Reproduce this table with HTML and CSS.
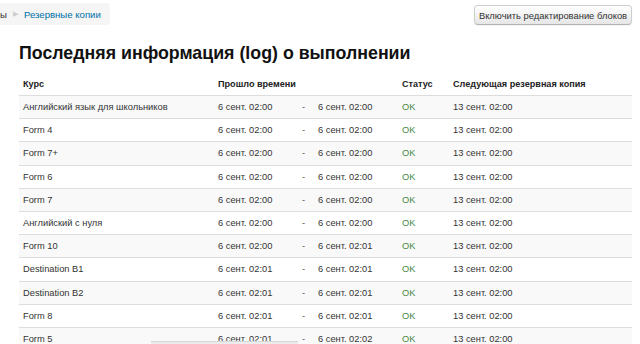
FILE: index.html
```html
<!DOCTYPE html>
<html lang="ru">
<head>
<meta charset="utf-8">
<title>Резервные копии</title>
<link rel="stylesheet" href="styles.css">
</head>
<body>
<div class="topbar">
  <nav class="breadcrumb">
    <span class="crumb">ы</span>
    <span class="sep">&#9654;</span>
    <a class="crumb link" href="#">Резервные копии</a>
  </nav>
  <button class="btn">Включить редактирование блоков</button>
</div>
<main class="content">
  <h2 class="title">Последняя информация (log) о выполнении</h2>
  <table class="log">
    <colgroup>
      <col class="c1"><col class="c2"><col class="c3"><col class="c4"><col class="c5"><col class="c6">
    </colgroup>
    <thead>
      <tr><th>Курс</th><th colspan="3">Прошло времени</th><th>Статус</th><th>Следующая резервная копия</th></tr>
    </thead>
    <tbody>
      <tr><td>Английский язык для школьников</td><td>6 сент. 02:00</td><td class="dash">-</td><td>6 сент. 02:00</td><td class="ok">OK</td><td>13 сент. 02:00</td></tr>
      <tr><td>Form 4</td><td>6 сент. 02:00</td><td class="dash">-</td><td>6 сент. 02:00</td><td class="ok">OK</td><td>13 сент. 02:00</td></tr>
      <tr><td>Form 7+</td><td>6 сент. 02:00</td><td class="dash">-</td><td>6 сент. 02:00</td><td class="ok">OK</td><td>13 сент. 02:00</td></tr>
      <tr><td>Form 6</td><td>6 сент. 02:00</td><td class="dash">-</td><td>6 сент. 02:00</td><td class="ok">OK</td><td>13 сент. 02:00</td></tr>
      <tr><td>Form 7</td><td>6 сент. 02:00</td><td class="dash">-</td><td>6 сент. 02:00</td><td class="ok">OK</td><td>13 сент. 02:00</td></tr>
      <tr><td>Английский с нуля</td><td>6 сент. 02:00</td><td class="dash">-</td><td>6 сент. 02:00</td><td class="ok">OK</td><td>13 сент. 02:00</td></tr>
      <tr><td>Form 10</td><td>6 сент. 02:00</td><td class="dash">-</td><td>6 сент. 02:01</td><td class="ok">OK</td><td>13 сент. 02:00</td></tr>
      <tr><td>Destination B1</td><td>6 сент. 02:01</td><td class="dash">-</td><td>6 сент. 02:01</td><td class="ok">OK</td><td>13 сент. 02:00</td></tr>
      <tr><td>Destination B2</td><td>6 сент. 02:01</td><td class="dash">-</td><td>6 сент. 02:01</td><td class="ok">OK</td><td>13 сент. 02:00</td></tr>
      <tr><td>Form 8</td><td>6 сент. 02:01</td><td class="dash">-</td><td>6 сент. 02:01</td><td class="ok">OK</td><td>13 сент. 02:00</td></tr>
      <tr><td>Form 5</td><td>6 сент. 02:01</td><td class="dash">-</td><td>6 сент. 02:02</td><td class="ok">OK</td><td>13 сент. 02:00</td></tr>
    </tbody>
  </table>
</main>
<div class="hscroll"></div>
</body>
</html>
```
FILE: styles.css
```css
html, body {
  margin: 0;
  padding: 0;
  background: #fff;
  overflow: hidden;
  height: 344px;
}
body {
  font-family: "Liberation Sans", Arial, sans-serif;
  color: #333;
  font-size: 9.3px;
  position: relative;
}
.topbar {
  display: flex;
  justify-content: space-between;
  align-items: flex-start;
  padding: 3px 8px 0 0;
  height: 32px;
  box-sizing: border-box;
}
.breadcrumb {
  display: flex;
  align-items: center;
  white-space: nowrap;
  background: #f5f5f5;
  border-radius: 0 4px 4px 0;
  height: 22px;
  padding: 0 9px 0 0;
  font-size: 9.6px;
}
.crumb { color: #333; }
.sep {
  color: #ccc;
  font-size: 7px;
  margin: 0 6px 0 6px;
}
.link {
  color: #0070a8;
  text-decoration: none;
}
.btn {
  margin-top: 2px;
  height: 20px;
  width: 158px;
  padding: 0;
  white-space: nowrap;
  font-family: "Liberation Sans", Arial, sans-serif;
  font-size: 9.4px;
  color: #333;
  background: linear-gradient(#ffffff, #e6e6e6);
  border: 1px solid #cfcfcf;
  border-bottom-color: #b3b3b3;
  border-radius: 4px;
  box-shadow: inset 0 1px 0 rgba(255,255,255,0.2), 0 1px 2px rgba(0,0,0,0.05);
}
.content {
  padding: 0 8px 0 19px;
}
.title {
  margin: 7px 0 0 0;
  font-size: 17.8px;
  line-height: 28px;
  font-weight: bold;
  color: #111;
}
.log {
  margin-top: 6px;
  width: 613px;
  border-collapse: collapse;
  table-layout: fixed;
}
.c1 { width: 195px; }
.c2 { width: 84px; }
.c3 { width: 16px; }
.c4 { width: 84px; }
.c5 { width: 51px; }
.c6 { width: 183px; }
.log th {
  text-align: left;
  font-weight: bold;
  color: #222;
  font-size: 9.1px;
  padding: 4px 4px;
  line-height: 14px;
}
.log td {
  padding: 4px 4px;
  line-height: 14.2px;
  border-top: 1px solid #ddd;
  white-space: nowrap;
  overflow: hidden;
}
.log tbody tr:nth-child(odd) td { background: #f9f9f9; }
.dash { color: #555; }
.ok { color: #468847; }
.hscroll {
  position: absolute;
  left: 151px;
  top: 341px;
  width: 147px;
  height: 6px;
  background: #ececec;
  border-top: 1px solid #d6d6d6;
}
```
